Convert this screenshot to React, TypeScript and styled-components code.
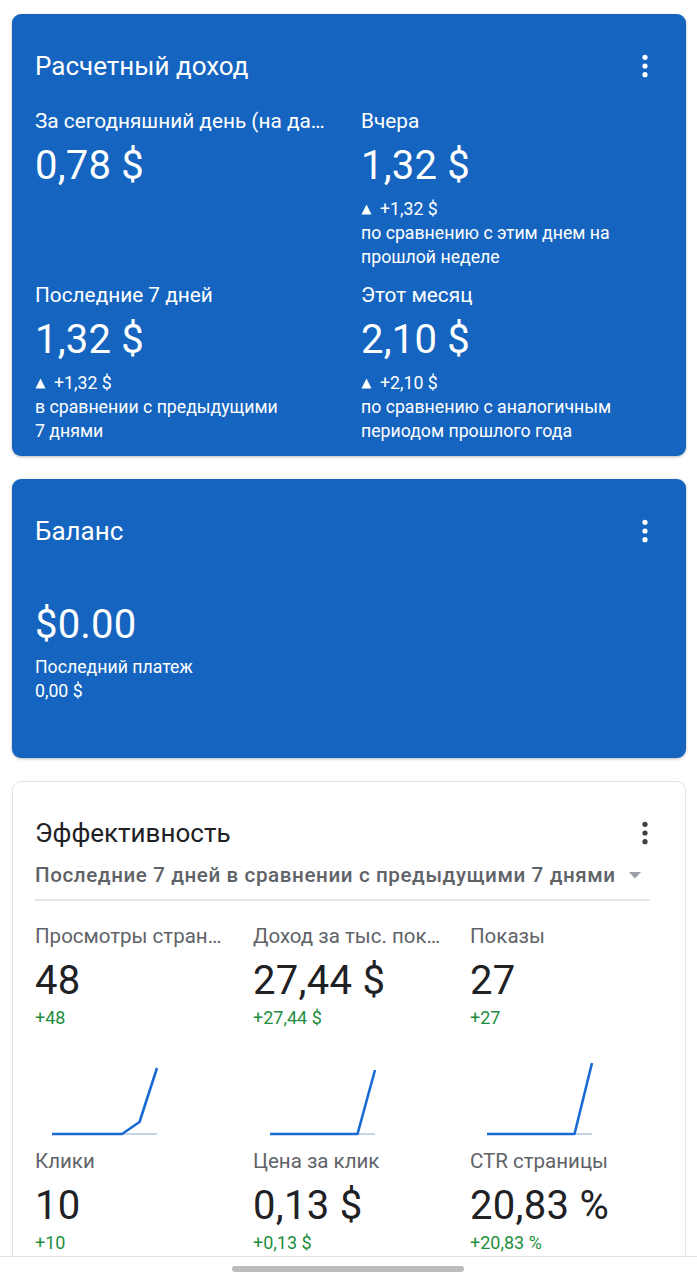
import React from "react";
import styled, { createGlobalStyle, css } from "styled-components";

const Global = createGlobalStyle`
  html, body { margin: 0; padding: 0; background: #ffffff; }
  body { font-family: Roboto, "Noto Sans", Arial, sans-serif; -webkit-font-smoothing: antialiased; }
  * { box-sizing: border-box; }
`;

const Screen = styled.div`
  width: 697px;
  height: 1280px;
  display: flex;
  flex-direction: column;
  overflow: hidden;
  background: #fff;
`;

const Content = styled.main`
  flex: 1;
  overflow: hidden;
  padding: 14px 11px 0 12px;
  display: flex;
  flex-direction: column;
  gap: 23px;
`;

const Card = styled.section<{ $variant: "blue" | "white" }>`
  border-radius: 9px;
  padding: 38px 36px 13px 23px;
  flex-shrink: 0;
  ${(p) =>
    p.$variant === "blue"
      ? css`
          background: #1565c0;
          color: #fff;
          box-shadow: 0 1px 3px rgba(0, 0, 0, 0.28);
        `
      : css`
          background: #fff;
          color: #202124;
          border: 1px solid #e3e3e3;
          box-shadow: 0 1px 2px rgba(0, 0, 0, 0.06);
          padding: 37px 35px 13px 22px;
        `}
`;

const Header = styled.div`
  display: flex;
  align-items: center;
  justify-content: space-between;
  height: 28px;
`;

const Title = styled.h2`
  margin: 0;
  font-size: 26px;
  line-height: 28px;
  font-weight: 400;
`;

const MoreButton = styled.span`
  display: flex;
  width: 10px;
  height: 28px;
  align-items: center;
  justify-content: center;
`;

const MoreIcon = ({ color }: { color: string }) => (
  <MoreButton>
    <svg width="10" height="26" viewBox="0 0 10 26">
      <circle cx="5" cy="4.3" r="2.6" fill={color} />
      <circle cx="5" cy="13" r="2.6" fill={color} />
      <circle cx="5" cy="21.7" r="2.6" fill={color} />
    </svg>
  </MoreButton>
);

const IncomeGrid = styled.div`
  display: grid;
  grid-template-columns: 326px 1fr;
  row-gap: 14px;
  margin-top: 29px;
`;

const Stat = styled.div`
  display: flex;
  flex-direction: column;
  min-width: 0;
`;

const StatLabel = styled.div`
  font-size: 20.8px;
  line-height: 24px;
  white-space: nowrap;
  overflow: hidden;
  text-overflow: ellipsis;
  padding-right: 30px;
`;

const BigValue = styled.div<{ $gap?: number }>`
  font-size: 40px;
  line-height: 44px;
  font-weight: 400;
  margin-top: ${(p) => p.$gap ?? 11}px;
  letter-spacing: 0.2px;
`;

const Delta = styled.div`
  display: flex;
  align-items: center;
  gap: 8px;
  font-size: 17.7px;
  line-height: 24px;
  margin-top: 9px;
`;

const Note = styled.div<{ $gap?: number }>`
  font-size: 17.7px;
  line-height: 24px;
  margin-top: ${(p) => p.$gap ?? 0}px;
`;

const UpTriangle = () => (
  <svg width="11" height="11" viewBox="0 0 11 11">
    <path d="M5.5 0.5 L10.5 10.5 L0.5 10.5 Z" fill="#fff" />
  </svg>
);

const BalanceBody = styled.div`
  display: flex;
  flex-direction: column;
  margin-top: 58px;
  padding-bottom: 42px;
`;

const Filter = styled.div`
  display: flex;
  align-items: center;
  gap: 13px;
  margin-top: 16px;
  padding-bottom: 12px;
  border-bottom: 2px solid #e6e6e6;
  font-size: 20.6px;
  line-height: 24px;
  font-weight: 500;
  letter-spacing: 0.6px;
  color: #5f6368;
  white-space: nowrap;
`;

const DropArrow = () => (
  <svg width="12" height="7" viewBox="0 0 12 7">
    <path d="M0 0 L12 0 L6 6.5 Z" fill="#9aa0a6" />
  </svg>
);

const MetricsGrid = styled.div`
  display: grid;
  grid-template-columns: 218px 217px 1fr;
  margin-top: 23px;
  row-gap: 12px;
`;

const Metric = styled.div`
  display: flex;
  flex-direction: column;
  min-width: 0;
`;

const MetricLabel = styled.div`
  font-size: 20.5px;
  line-height: 24px;
  color: #5f6368;
  white-space: nowrap;
  overflow: hidden;
  text-overflow: ellipsis;
  padding-right: 24px;
`;

const MetricValue = styled.div`
  font-size: 40px;
  line-height: 44px;
  color: #202124;
  margin-top: 11px;
  letter-spacing: 0.3px;
`;

const MetricDelta = styled.div`
  font-size: 18px;
  line-height: 20px;
  color: #1e8e3e;
  margin-top: 5px;
`;

const ChartBox = styled.div`
  margin-top: 28px;
  height: 81px;
`;

const Sparkline = ({ ys }: { ys: number[] }) => {
  const pts = ys.map((y, i) => `${17 + i * 17.5},${y}`).join(" ");
  return (
    <svg width="140" height="81" viewBox="0 0 140 81">
      <line x1="17" y1="78" x2="122" y2="78" stroke="#c6d4e6" strokeWidth="2" />
      <polyline
        points={pts}
        fill="none"
        stroke="#1a6ad6"
        strokeWidth="2.6"
        strokeLinejoin="round"
      />
    </svg>
  );
};

const BottomBar = styled.footer`
  height: 24px;
  flex-shrink: 0;
  border-top: 1px solid #e2e2e2;
  display: flex;
  align-items: center;
  justify-content: center;
  background: #fff;
`;

const Pill = styled.div`
  width: 232px;
  height: 6px;
  border-radius: 3px;
  background: #bdbdbd;
  margin-left: -2px;
`;

const metrics = [
  { label: "Просмотры страниц", value: "48", delta: "+48", chart: [78, 78, 78, 78, 78, 66, 12] },
  { label: "Доход за тыс. показов", value: "27,44 $", delta: "+27,44 $", chart: [78, 78, 78, 78, 78, 78, 14] },
  { label: "Показы", value: "27", delta: "+27", chart: [78, 78, 78, 78, 78, 78, 7] },
  { label: "Клики", value: "10", delta: "+10" },
  { label: "Цена за клик", value: "0,13 $", delta: "+0,13 $" },
  { label: "CTR страницы", value: "20,83 %", delta: "+20,83 %" },
];

export default function App() {
  return (
    <>
      <Global />
      <Screen>
        <Content>
          <Card $variant="blue">
            <Header>
              <Title>Расчетный доход</Title>
              <MoreIcon color="#fff" />
            </Header>
            <IncomeGrid>
              <Stat>
                <StatLabel>За сегодняшний день (на данный момент)</StatLabel>
                <BigValue>0,78 $</BigValue>
              </Stat>
              <Stat>
                <StatLabel>Вчера</StatLabel>
                <BigValue>1,32 $</BigValue>
                <Delta>
                  <UpTriangle />
                  +1,32 $
                </Delta>
                <Note>
                  по сравнению с этим днем на
                  <br />
                  прошлой неделе
                </Note>
              </Stat>
              <Stat>
                <StatLabel>Последние 7 дней</StatLabel>
                <BigValue>1,32 $</BigValue>
                <Delta>
                  <UpTriangle />
                  +1,32 $
                </Delta>
                <Note>
                  в сравнении с предыдущими
                  <br />7 днями
                </Note>
              </Stat>
              <Stat>
                <StatLabel>Этот месяц</StatLabel>
                <BigValue>2,10 $</BigValue>
                <Delta>
                  <UpTriangle />
                  +2,10 $
                </Delta>
                <Note>
                  по сравнению с аналогичным
                  <br />
                  периодом прошлого года
                </Note>
              </Stat>
            </IncomeGrid>
          </Card>

          <Card $variant="blue">
            <Header>
              <Title>Баланс</Title>
              <MoreIcon color="#fff" />
            </Header>
            <BalanceBody>
              <BigValue $gap={0}>$0.00</BigValue>
              <Note $gap={8}>Последний платеж</Note>
              <Note>0,00 $</Note>
            </BalanceBody>
          </Card>

          <Card $variant="white">
            <Header>
              <Title>Эффективность</Title>
              <MoreIcon color="#3c4043" />
            </Header>
            <Filter>
              Последние 7 дней в сравнении с предыдущими 7 днями
              <DropArrow />
            </Filter>
            <MetricsGrid>
              {metrics.map((m) => (
                <Metric key={m.label}>
                  <MetricLabel>{m.label}</MetricLabel>
                  <MetricValue>{m.value}</MetricValue>
                  <MetricDelta>{m.delta}</MetricDelta>
                  {m.chart && (
                    <ChartBox>
                      <Sparkline ys={m.chart} />
                    </ChartBox>
                  )}
                </Metric>
              ))}
            </MetricsGrid>
          </Card>
        </Content>
        <BottomBar>
          <Pill />
        </BottomBar>
      </Screen>
    </>
  );
}
